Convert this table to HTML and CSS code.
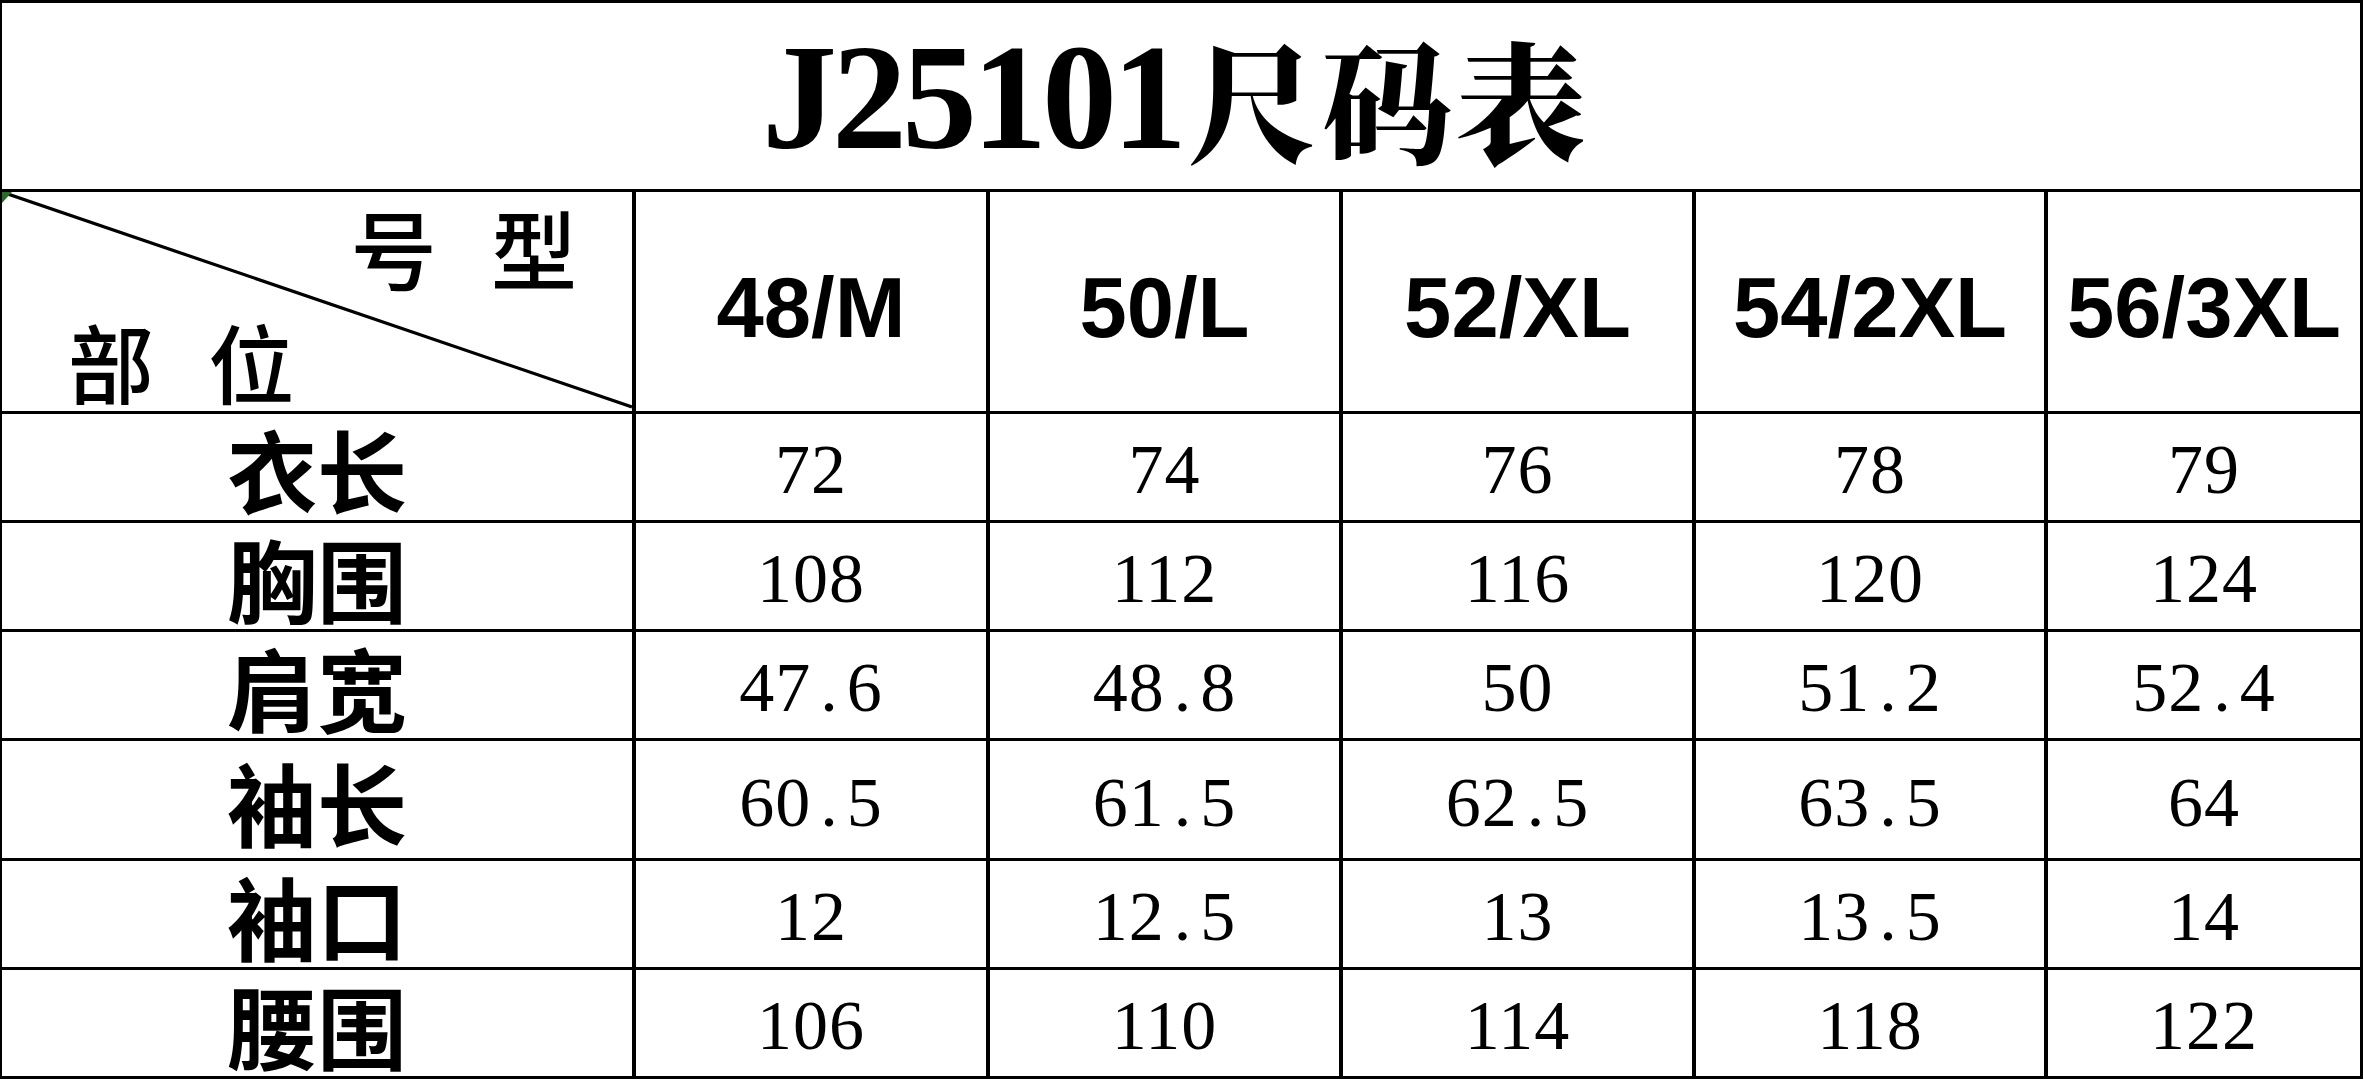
FILE: index.html
```html
<!DOCTYPE html>
<html lang="zh-CN">
<head>
<meta charset="utf-8">
<title>J25101尺码表</title>
<link rel="stylesheet" href="styles.css">
</head>
<body>
<div class="sheet">
  <div class="title"><span class="title-latin">J25101</span><span class="title-cjk">尺码表</span></div>

  <div class="corner">
    <svg class="diag" viewBox="0 0 630 219" preserveAspectRatio="none" aria-hidden="true">
      <line x1="0" y1="0" x2="630" y2="215" stroke="#000" stroke-width="3.2"/>
      <polygon points="0,0 10,0 0,11" fill="#2b6a2b"/>
    </svg>
    <div class="corner-top">号 型</div>
    <div class="corner-bottom">部 位</div>
  </div>
  <div class="size">48/M</div>
  <div class="size">50/L</div>
  <div class="size">52/XL</div>
  <div class="size">54/2XL</div>
  <div class="size">56/3XL</div>

  <div class="label">衣长</div>
  <div class="val">72</div>
  <div class="val">74</div>
  <div class="val">76</div>
  <div class="val">78</div>
  <div class="val">79</div>

  <div class="label">胸围</div>
  <div class="val">108</div>
  <div class="val">112</div>
  <div class="val">116</div>
  <div class="val">120</div>
  <div class="val">124</div>

  <div class="label">肩宽</div>
  <div class="val">47<span class="dot">.</span>6</div>
  <div class="val">48<span class="dot">.</span>8</div>
  <div class="val">50</div>
  <div class="val">51<span class="dot">.</span>2</div>
  <div class="val">52<span class="dot">.</span>4</div>

  <div class="label">袖长</div>
  <div class="val">60<span class="dot">.</span>5</div>
  <div class="val">61<span class="dot">.</span>5</div>
  <div class="val">62<span class="dot">.</span>5</div>
  <div class="val">63<span class="dot">.</span>5</div>
  <div class="val">64</div>

  <div class="label">袖口</div>
  <div class="val">12</div>
  <div class="val">12<span class="dot">.</span>5</div>
  <div class="val">13</div>
  <div class="val">13<span class="dot">.</span>5</div>
  <div class="val">14</div>

  <div class="label">腰围</div>
  <div class="val">106</div>
  <div class="val">110</div>
  <div class="val">114</div>
  <div class="val">118</div>
  <div class="val">122</div>
</div>
</body>
</html>
```

FILE: styles.css
```css
html, body {
  margin: 0;
  padding: 0;
  background: #ffffff;
}

body {
  width: 2364px;
  height: 1080px;
  overflow: hidden;
}

.sheet {
  display: grid;
  grid-template-columns: 630px 350px 349px 349px 348px 312px;
  grid-template-rows: 186px 219px 106px 106px 106px 117px 106px 106px;
  column-gap: 4px;
  row-gap: 3px;
  padding: 3px 3px 3px 2px;
  width: 2363px;
  box-sizing: border-box;
  background: #000000;
}

.sheet > div {
  background: #ffffff;
  color: #000000;
}

.title {
  grid-column: 1 / -1;
  display: flex;
  align-items: center;
  justify-content: center;
  line-height: 1;
  padding-top: 2px;
  padding-right: 10px;
}

.title-latin {
  font-family: "Liberation Serif", "Times New Roman", serif;
  font-weight: 700;
  font-size: 150px;
  letter-spacing: -5px;
}

.title-cjk {
  font-family: "Noto Serif CJK SC", "Noto Sans CJK SC", serif;
  font-weight: 900;
  font-size: 130px;
  letter-spacing: 4px;
  margin-left: 6px;
}

.corner {
  position: relative;
  display: flex;
  flex-direction: column;
  justify-content: space-between;
  font-family: "Noto Sans CJK SC", sans-serif;
  font-weight: 500;
  font-size: 86px;
  line-height: 1;
  word-spacing: 35px;
  padding: 12px 55px 7px 66px;
  box-sizing: border-box;
}

.diag {
  position: absolute;
  left: 0;
  top: 0;
  width: 100%;
  height: 100%;
}

.corner-top {
  text-align: right;
}

.corner-bottom {
  text-align: left;
}

.size {
  display: flex;
  align-items: center;
  justify-content: center;
  font-family: "Liberation Sans", Arial, sans-serif;
  font-weight: 700;
  font-size: 85px;
  line-height: 1;
  padding-top: 12px;
  box-sizing: border-box;
}

.label {
  display: flex;
  align-items: center;
  justify-content: center;
  font-family: "Noto Sans CJK SC", sans-serif;
  font-weight: 700;
  font-size: 90px;
  line-height: 1;
  padding-top: 2px;
  box-sizing: border-box;
}

.val {
  display: flex;
  align-items: center;
  justify-content: center;
  font-family: "Liberation Serif", "Times New Roman", serif;
  font-size: 70px;
  letter-spacing: 1px;
  line-height: 1;
  color: #1c1c1c;
  padding-top: 6px;
  box-sizing: border-box;
}

.dot {
  letter-spacing: 0;
  padding: 0 9px;
}
```
